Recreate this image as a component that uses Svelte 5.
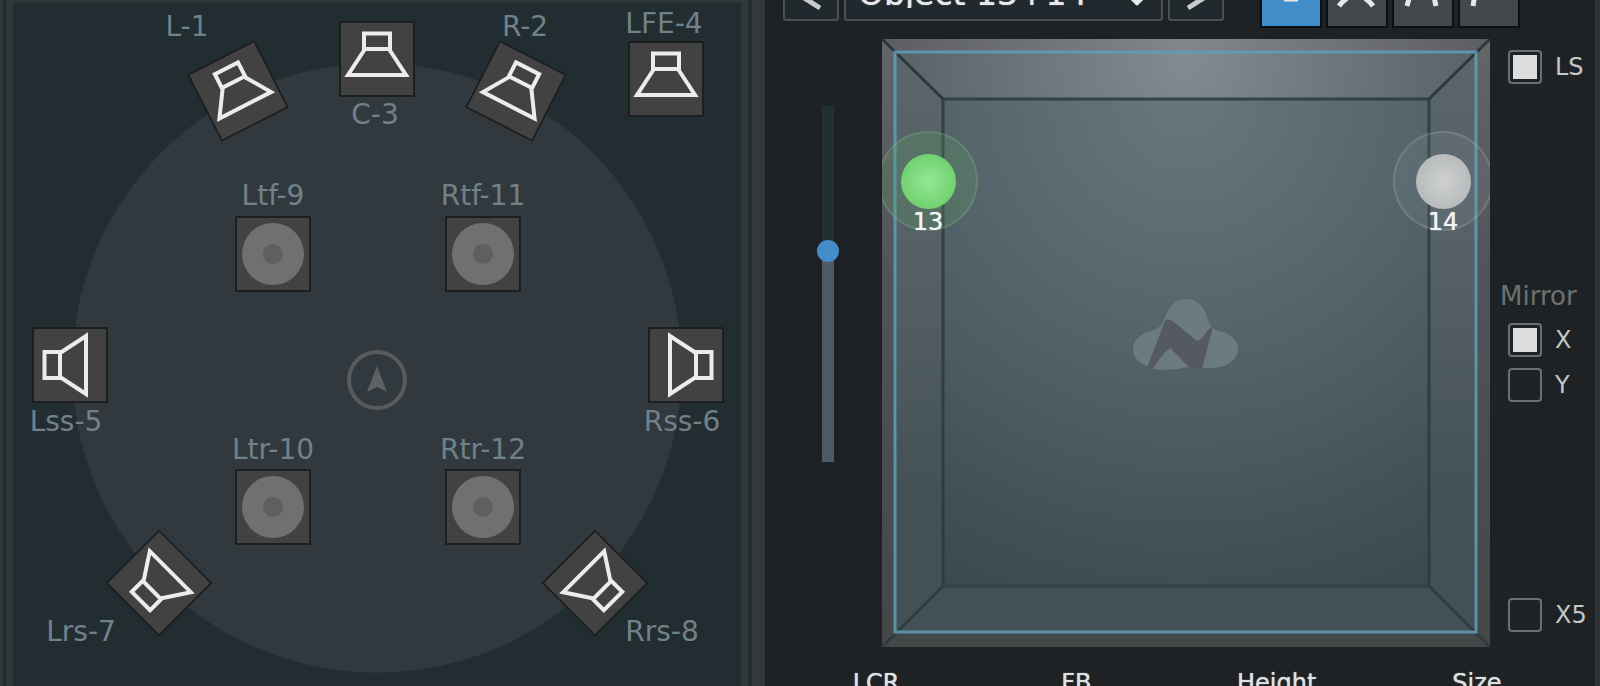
<script lang="ts">
  type Speaker = {
    name: string;
    kind: "cone" | "ceiling";
    /** Box centre, in room units. */
    x: number;
    y: number;
    angle: number;
    labelX: number;
    labelY: number;
  };

  const ROOM_W = 728;
  const ROOM_H = 683;
  const SCENE = 608;

  const speakers: Speaker[] = [
    { name: "L-1", kind: "cone", x: 225, y: 88, angle: -27, labelX: 174, labelY: 24 },
    { name: "R-2", kind: "cone", x: 503, y: 88, angle: 27, labelX: 512, labelY: 24 },
    { name: "C-3", kind: "cone", x: 364, y: 56, angle: 0, labelX: 362, labelY: 112 },
    { name: "LFE-4", kind: "cone", x: 653, y: 76, angle: 0, labelX: 651, labelY: 21 },
    { name: "Lss-5", kind: "cone", x: 57, y: 362, angle: -90, labelX: 53, labelY: 419 },
    { name: "Rss-6", kind: "cone", x: 673, y: 362, angle: 90, labelX: 669, labelY: 419 },
    { name: "Lrs-7", kind: "cone", x: 146, y: 580, angle: -135, labelX: 68, labelY: 629 },
    { name: "Rrs-8", kind: "cone", x: 582, y: 580, angle: 135, labelX: 649, labelY: 629 },
    { name: "Ltf-9", kind: "ceiling", x: 260, y: 251, angle: 0, labelX: 260, labelY: 193 },
    { name: "Ltr-10", kind: "ceiling", x: 260, y: 504, angle: 0, labelX: 260, labelY: 447 },
    { name: "Rtf-11", kind: "ceiling", x: 470, y: 251, angle: 0, labelX: 470, labelY: 193 },
    { name: "Rtr-12", kind: "ceiling", x: 470, y: 504, angle: 0, labelX: 470, labelY: 447 },
  ];

  const objects = [
    { id: 13, x: 46, y: 142, tone: "green" },
    { id: 14, x: 561, y: 142, tone: "grey" },
  ];

  const shapes = [
    { id: "flat", d: "M22 29H36" },
    { id: "wedge", d: "M11 36Q15 30 28 22Q41 30 45 36" },
    { id: "tent", d: "M13 36L18 18M42 36L38 18" },
    { id: "step", d: "M13 36L16 18H40" },
  ];

  const knobs = ["LCR", "FB", "Height", "Size"];

  let height = $state(60);
  let shape = $state("flat");
  let ls = $state(true);
  let mirrorX = $state(true);
  let mirrorY = $state(false);
  let x5 = $state(false);

  function place(x: number, y: number, w: number, h: number): string {
    return `left: ${(x / w) * 100}%; top: ${(y / h) * 100}%`;
  }
</script>

{#snippet check(label: string, get: () => boolean, set: (v: boolean) => void)}
  <label class="check">
    <input type="checkbox" checked={get()} onchange={(e) => set(e.currentTarget.checked)} />
    {label}
  </label>
{/snippet}

<main class="app">
  <section class="monitor">
    <div class="frame">
      <div class="room">
        <svg class="floor" viewBox="0 0 728 683" aria-hidden="true">
          <circle cx="364" cy="365" r="305" fill="#31393e" stroke="#263034" stroke-width="1" />
          <circle cx="364" cy="377" r="28" fill="none" stroke="#555b5e" stroke-width="4" />
          <path d="M364 363L374 389L364 384L354 389Z" fill="#5b6164" />
        </svg>
        {#each speakers as sp (sp.name)}
          <div class="speaker" style={place(sp.x, sp.y, ROOM_W, ROOM_H)}>
            <svg viewBox="0 0 76 76" style="transform: rotate({sp.angle}deg)" aria-hidden="true">
              <rect x="1" y="1" width="74" height="74" fill="#434242" stroke="#1b1f20" stroke-width="2" />
              {#if sp.kind === "cone"}
                <path
                  d="M25 12.5H51V28H25ZM26 28L9 54H67L50 28"
                  fill="none"
                  stroke="#ececec"
                  stroke-width="4"
                />
              {:else}
                <circle cx="38" cy="38" r="31" fill="#707070" />
                <circle cx="38" cy="38" r="10" fill="#5f5f5e" />
              {/if}
            </svg>
          </div>
          <span class="name" style={place(sp.labelX, sp.labelY, ROOM_W, ROOM_H)}>{sp.name}</span>
        {/each}
      </div>
    </div>
  </section>

  <section class="panner">
    <header class="toolbar">
      <div class="picker">
        <button class="step" aria-label="Previous object">
          <svg viewBox="0 0 52 50"><path d="M35 11L13 25L35 39" /></svg>
        </button>
        <div class="select">
          <select aria-label="Object">
            <option>Object 13+14</option>
          </select>
          <svg viewBox="0 0 24 24" aria-hidden="true"><path d="M4 11L12 19L20 11Z" /></svg>
        </div>
        <button class="step" aria-label="Next object">
          <svg viewBox="0 0 52 50"><path d="M18 39L40 25L18 11" /></svg>
        </button>
      </div>
      <div class="shapes">
        {#each shapes as s (s.id)}
          <button
            class:active={shape === s.id}
            aria-label={s.id}
            aria-pressed={shape === s.id}
            onclick={() => (shape = s.id)}
          >
            <svg viewBox="0 0 58 56"><path d={s.d} /></svg>
          </button>
        {/each}
      </div>
    </header>

    <div class="stage">
      <div class="fader">
        <input
          type="range"
          min="0"
          max="100"
          aria-label="Height"
          bind:value={height}
          style="--level: {height}%"
        />
      </div>

      <div class="scene">
        <svg class="cube" viewBox="0 0 608 608" aria-hidden="true">
          <defs>
            <linearGradient id="rim" x1="0" y1="0" x2="0" y2="1">
              <stop offset="0" stop-color="#636568" />
              <stop offset="0.4" stop-color="#505458" />
              <stop offset="1" stop-color="#434748" />
            </linearGradient>
            <linearGradient id="rimTop" x1="0" y1="0" x2="1" y2="0">
              <stop offset="0" stop-color="#5b5d60" />
              <stop offset="0.5" stop-color="#84878a" />
              <stop offset="1" stop-color="#5b5d60" />
            </linearGradient>
            <radialGradient id="ceil" gradientUnits="userSpaceOnUse" cx="304" cy="20" r="300">
              <stop offset="0" stop-color="#808c8f" />
              <stop offset="0.5" stop-color="#6b777a" />
              <stop offset="1" stop-color="#566266" />
            </radialGradient>
            <linearGradient id="wall" x1="0" y1="0" x2="0" y2="1">
              <stop offset="0" stop-color="#59656a" />
              <stop offset="0.35" stop-color="#556167" />
              <stop offset="0.75" stop-color="#445156" />
              <stop offset="1" stop-color="#435055" />
            </linearGradient>
            <radialGradient id="back" gradientUnits="userSpaceOnUse" cx="304" cy="60" r="560">
              <stop offset="0" stop-color="#67777c" />
              <stop offset="0.45" stop-color="#54636a" />
              <stop offset="0.8" stop-color="#435157" />
              <stop offset="1" stop-color="#3a474e" />
            </radialGradient>
          </defs>
          <rect width="608" height="608" fill="url(#rim)" />
          <path d="M0 0H608L595 13H13Z" fill="url(#rimTop)" />
          <rect x="13" y="13" width="581" height="581" fill="url(#wall)" />
          <path d="M13 13H594L547 60H61Z" fill="url(#ceil)" />
          <rect x="61" y="60" width="486" height="487" fill="url(#back)" />
          <g fill="none" stroke="#2b383d" stroke-width="3">
            <path d="M0 0L61 60M608 0L547 60" />
            <path d="M61 547V60H547V547" stroke-opacity="0.85" />
            <path d="M61 547H547" stroke="#34434a" />
            <path d="M0 608L61 547M608 608L547 547" stroke-opacity="0.8" />
          </g>
          <rect x="13" y="13" width="581" height="580" fill="none" stroke="#5f9dbb" stroke-width="3" stroke-opacity="0.85" />
          <g transform="translate(218 231)">
            <path
              d="M33 79C33 69 41 64 50 61C60 59 62 54 65 47C69 36 76 29 86 29C97 29 104 37 107 47C109 54 113 60 120 61C131 64 138 70 138 78C138 89 128 97 113 98C102 99 96 97 88 97C78 99 67 101 54 99C42 95 33 89 33 79Z"
              fill="#6c7b82"
            />
            <path d="M47 98L65 51C67 48 71 50 75 53L97 71C102 71 105 61 113 56L102 99H91L70 78Q62 84 53 99Z" fill="#545a5f" />
          </g>
        </svg>
        {#each objects as obj (obj.id)}
          <button class="puck {obj.tone}" style={place(obj.x, obj.y, SCENE, SCENE)}>
            <span class="ball"></span>
            <span class="id">{obj.id}</span>
          </button>
        {/each}
      </div>

      <div class="options">
        {@render check("LS", () => ls, (v) => (ls = v))}
        <fieldset>
          <legend>Mirror</legend>
          {@render check("X", () => mirrorX, (v) => (mirrorX = v))}
          {@render check("Y", () => mirrorY, (v) => (mirrorY = v))}
        </fieldset>
        {@render check("X5", () => x5, (v) => (x5 = v))}
      </div>
    </div>

    <footer class="knobs">
      {#each knobs as knob}
        <span>{knob}</span>
      {/each}
    </footer>
  </section>
</main>

<style>
  :global(body) {
    background: #1e2225;
  }
  .app {
    display: grid;
    grid-template-columns: 765fr 835fr;
    grid-template-rows: minmax(0, 1fr);
    height: 100vh;
    overflow: hidden;
    font-family: Verdana, "DejaVu Sans", sans-serif;
    font-size: 24px;
    line-height: 28px;
    color: #dfe1e2;
  }
  button, select {
    font: inherit;
    color: inherit;
    margin: 0;
    padding: 0;
    cursor: pointer;
  }

  /* speaker monitor */
  .monitor {
    display: flex;
    background: #31393c;
    padding: 0 13px 0 3px;
  }
  .frame {
    flex: 1;
    border: solid #232b2e;
    border-width: 0 4px 0 3px;
    background: #2e383b;
    padding: 3px 7px 0;
  }
  .room {
    position: relative;
    background: #222d32;
  }
  .floor {
    display: block;
    width: 100%;
  }
  .speaker {
    position: absolute;
    width: 76px;
    height: 76px;
    transform: translate(-50%, -50%);
  }
  .speaker svg {
    display: block;
  }
  .name {
    position: absolute;
    transform: translate(-50%, -50%);
    font-size: 28px;
    line-height: 30px;
    white-space: nowrap;
    color: #71818a;
  }

  /* object panner */
  .panner {
    display: flex;
    flex-direction: column;
    border-right: 5px solid #2d3134;
    background: #1e2225;
  }
  .toolbar {
    display: flex;
    align-items: flex-end;
    gap: 36px;
    height: 28px;
    flex: none;
    overflow: hidden;
    padding: 0 75px 0 18px;
  }
  .picker {
    flex: 1;
    display: flex;
    gap: 5px;
    margin-bottom: 7px;
  }
  .step {
    width: 56px;
    height: 54px;
    flex: none;
  }
  .step, select {
    box-sizing: border-box;
    border: 2px solid #4c5052;
    border-radius: 3px;
    background: #20292e;
  }
  .step svg {
    display: block;
    fill: none;
    stroke: #c9cccd;
    stroke-width: 5;
  }
  .select {
    position: relative;
    flex: 1;
  }
  select {
    appearance: none;
    width: 100%;
    height: 54px;
    padding: 0 12px;
    font-size: 33px;
    color: #e6e8e9;
    text-shadow: 0 0 1px #e6e8e9;
  }
  .select svg {
    position: absolute;
    right: 14px;
    top: 18px;
    width: 24px;
    fill: #e6e8e9;
    stroke: #e6e8e9;
    stroke-width: 3;
    stroke-linejoin: round;
    pointer-events: none;
  }
  .shapes {
    display: flex;
    gap: 4px;
  }
  .shapes button {
    width: 62px;
    height: 60px;
    box-sizing: border-box;
    border: 2px solid #0d1012;
    background: #42474a;
  }
  .shapes button.active {
    background: #418dca;
  }
  .shapes svg {
    display: block;
    fill: none;
    stroke: #e6e8e9;
    stroke-width: 5;
  }

  .stage {
    display: grid;
    grid-template-columns: 117px 1fr 105px;
    margin-top: 11px;
  }
  .fader {
    padding: 67px 0 0 52px;
  }
  .fader input {
    appearance: none;
    writing-mode: vertical-lr;
    direction: rtl;
    display: block;
    width: 22px;
    height: 356px;
    margin: 0;
    background: linear-gradient(to top, #4c5b66 var(--level), #233031 var(--level)) center / 12px 100% no-repeat;
  }
  .fader input::-webkit-slider-thumb {
    appearance: none;
    width: 22px;
    height: 22px;
    border-radius: 50%;
    background: #448bc9;
  }

  .scene {
    position: relative;
    overflow: hidden;
  }
  .cube {
    display: block;
    width: 100%;
  }
  .puck {
    position: absolute;
    width: 100px;
    height: 100px;
    transform: translate(-50%, -50%);
    border: 2px solid;
    border-radius: 50%;
    display: grid;
    place-items: center;
  }
  .green {
    background: rgba(90, 160, 95, 0.25);
    border-color: rgba(150, 200, 160, 0.2);
  }
  .grey {
    background: rgba(160, 165, 170, 0.12);
    border-color: rgba(190, 200, 205, 0.2);
  }
  .ball {
    width: 55px;
    height: 55px;
    border-radius: 50%;
  }
  .green .ball {
    background: radial-gradient(circle, #94e896, #72d170 70%);
  }
  .grey .ball {
    background: radial-gradient(circle, #cfd1d0, #b8bbbc 70%);
  }
  .id {
    position: absolute;
    bottom: -7px;
    color: #f2f4f4;
    text-shadow: 0 0 1px #f2f4f4;
  }

  .options {
    display: flex;
    flex-direction: column;
    justify-content: space-between;
    padding: 11px 0 15px 10px;
  }
  .check {
    display: flex;
    align-items: center;
    gap: 13px;
    padding-left: 8px;
    color: #c4c7c8;
  }
  .check input {
    appearance: none;
    box-sizing: border-box;
    flex: none;
    width: 34px;
    height: 34px;
    margin: 0;
    padding: 3px;
    border: 2px solid #6c6f70;
    border-radius: 4px;
  }
  .check input:checked {
    background: #dcddde content-box;
  }
  fieldset {
    display: flex;
    flex-direction: column;
    gap: 11px;
    min-width: 0;
    margin: 0;
    padding: 0;
    border: 0;
  }
  legend {
    padding: 0 0 12px;
    font-size: 26px;
    line-height: 30px;
    color: #6d7173;
  }

  .knobs {
    display: grid;
    grid-template-columns: repeat(4, 1fr);
    margin: 22px 18px 0 11px;
    text-align: center;
    text-shadow: 0 0 1px #dfe1e2;
  }
</style>
